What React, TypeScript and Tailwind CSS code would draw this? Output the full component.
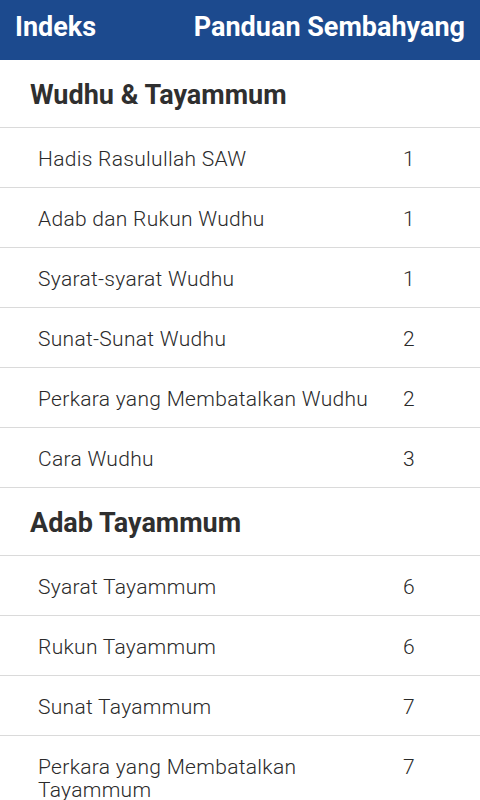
import React from "react";

type Entry = { title: string; page: number };
type Section = { heading: string; entries: Entry[] };

const sections: Section[] = [
  {
    heading: "Wudhu & Tayammum",
    entries: [
      { title: "Hadis Rasulullah SAW", page: 1 },
      { title: "Adab dan Rukun Wudhu", page: 1 },
      { title: "Syarat-syarat Wudhu", page: 1 },
      { title: "Sunat-Sunat Wudhu", page: 2 },
      { title: "Perkara yang Membatalkan Wudhu", page: 2 },
      { title: "Cara Wudhu", page: 3 },
    ],
  },
  {
    heading: "Adab Tayammum",
    entries: [
      { title: "Syarat Tayammum", page: 6 },
      { title: "Rukun Tayammum", page: 6 },
      { title: "Sunat Tayammum", page: 7 },
      { title: "Perkara yang Membatalkan Tayammum", page: 7 },
    ],
  },
];

const App = () => {
  return (
    <div className="w-[480px] h-[800px] overflow-hidden bg-white font-['Roboto',sans-serif]">
      {/* Action bar */}
      <div className="h-[60px] bg-[#1c4a8e] flex items-center justify-between px-[15px] pb-[6px] text-white font-bold text-[27px]">
        <span>Indeks</span>
        <span>Panduan Sembahyang</span>
      </div>

      {/* Index list */}
      {sections.map((section) => (
        <div key={section.heading}>
          <div className="h-[68px] flex items-center pl-[30px] pt-[4px] border-b border-[#dadada] text-[27px] font-bold text-[#2f2f2f]">
            {section.heading}
          </div>
          {section.entries.map((entry) => (
            <div
              key={entry.title}
              className="min-h-[60px] flex items-start pt-[20px] pb-[16px] border-b border-[#dadada] text-[21px] leading-[23px] font-light tracking-[0.3px] text-[#2a2a2a]"
            >
              <span className="pl-[38px] w-[403px] pr-[13px]">{entry.title}</span>
              <span>{entry.page}</span>
            </div>
          ))}
        </div>
      ))}
    </div>
  );
};

export default App;
